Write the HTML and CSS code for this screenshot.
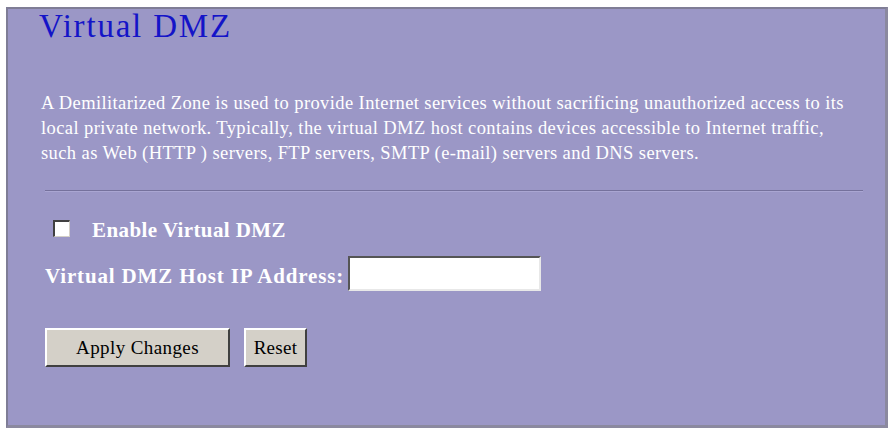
FILE: index.html
```html
<!DOCTYPE html>
<html>
<head>
<meta charset="utf-8">
<link rel="stylesheet" href="styles.css">
</head>
<body>
<div class="panel">
  <h1 class="title">Virtual DMZ</h1>
  <p class="desc">A Demilitarized Zone is used to provide Internet services without sacrificing unauthorized access to its local private network. Typically, the virtual DMZ host contains devices accessible to Internet traffic, such as Web (HTTP ) servers, FTP servers, SMTP (e-mail) servers and DNS servers.</p>
  <div class="sep"></div>
  <div class="row-enable">
    <span class="check"></span>
    <span class="label label-enable">Enable Virtual DMZ</span>
  </div>
  <div class="row-ip">
    <span class="label label-ip">Virtual DMZ Host IP Address:</span>
    <span class="input"></span>
  </div>
  <div class="buttons">
    <span class="btn btn-apply">Apply Changes</span>
    <span class="btn btn-reset">Reset</span>
  </div>
</div>
</body>
</html>
```
FILE: styles.css
```css
html, body {
  margin: 0;
  padding: 0;
  background: #ffffff;
}
body {
  font-family: "Liberation Serif", "Times New Roman", serif;
}
.panel {
  box-sizing: border-box;
  margin: 7px 0 0 6px;
  width: 882px;
  height: 421px;
  background: #9b97c6;
  border-top: 2px solid #7f7d96;
  border-left: 2px solid #7f7d96;
  border-right: 3px solid #8b899f;
  border-bottom: 3px solid #8b899f;
  padding: 0 22px 0 31px;
  display: flex;
  flex-direction: column;
}
.title {
  margin: 4px 0 0 0;
  font-weight: normal;
  font-size: 33px;
  line-height: 26px;
  letter-spacing: 1.8px;
  color: #1414c8;
}
.desc {
  margin: 52px 14px 0 2px;
  color: #ffffff;
  font-size: 18.5px;
  line-height: 25px;
  letter-spacing: 0.4px;
}
.sep {
  margin: 24px 0 0 6px;
  height: 0;
  border-top: 1px solid #75719c;
  border-bottom: 1px solid #aaa6d2;
}
.row-enable {
  display: flex;
  align-items: flex-start;
  margin: 26px 0 0 14px;
  gap: 22px;
}
.check {
  margin-top: 2px;
  width: 14px;
  height: 14px;
  background: #ffffff;
  border-top: 2px solid #404040;
  border-left: 2px solid #404040;
  border-right: 1px solid #d4d0c8;
  border-bottom: 1px solid #d4d0c8;
}
.label {
  color: #ffffff;
  font-weight: bold;
  font-size: 21px;
  line-height: 24px;
}
.label-enable {
  letter-spacing: 0.4px;
}
.label-ip {
  letter-spacing: 0.85px;
  margin-top: 8px;
}
.row-ip {
  display: flex;
  align-items: flex-start;
  margin: 14px 0 0 6px;
  gap: 4px;
}
.input {
  box-sizing: border-box;
  width: 193px;
  height: 35px;
  background: #ffffff;
  border-top: 2px solid #555555;
  border-left: 2px solid #555555;
  border-right: 2px solid #e8e8e8;
  border-bottom: 2px solid #e8e8e8;
}
.buttons {
  display: flex;
  margin: 37px 0 0 6px;
  gap: 14px;
}
.btn {
  box-sizing: border-box;
  height: 39px;
  display: flex;
  align-items: center;
  justify-content: center;
  background: #d4d0c8;
  color: #000000;
  font-size: 19px;
  border-top: 2px solid #ffffff;
  border-left: 2px solid #ffffff;
  border-right: 2px solid #404040;
  border-bottom: 2px solid #404040;
}
.btn-apply {
  width: 185px;
  letter-spacing: 0.4px;
}
.btn-reset {
  width: 63px;
  letter-spacing: 0.3px;
}
```
